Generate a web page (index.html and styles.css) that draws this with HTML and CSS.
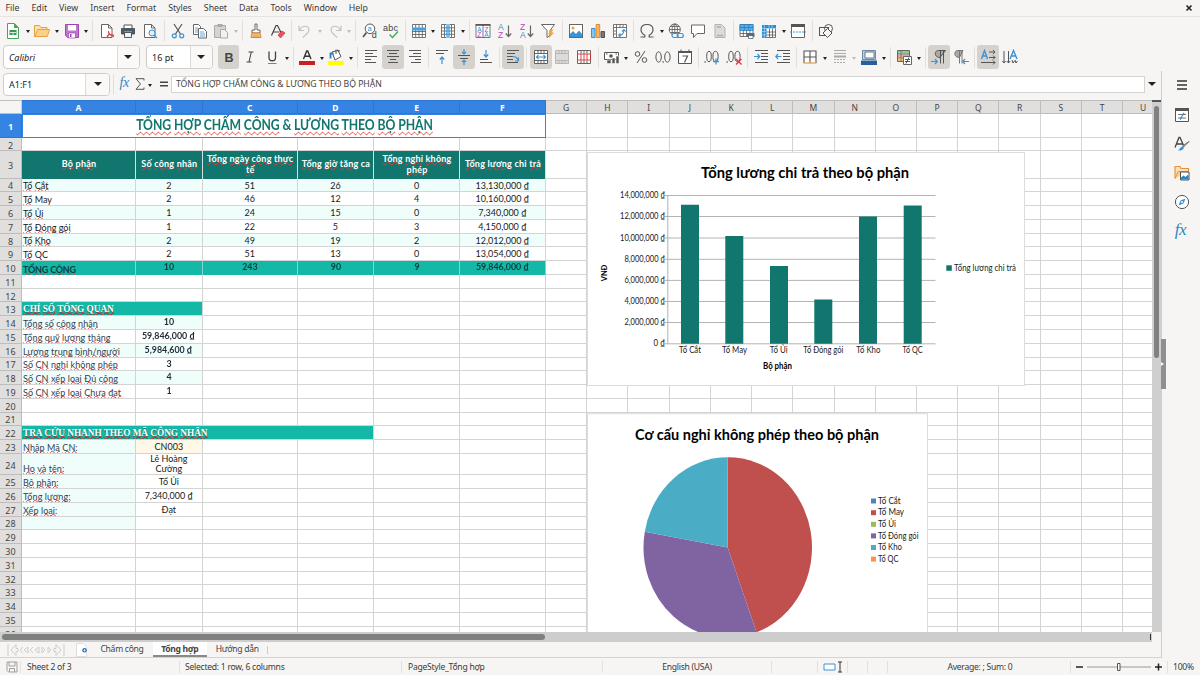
FILE: index.html
```html
<!DOCTYPE html>
<html lang="vi">
<head>
<meta charset="utf-8">
<title>Tổng hợp</title>
<link rel="stylesheet" href="styles.css">
</head>
<body>
<nav class="menubar">
  <span>File</span><span>Edit</span><span>View</span><span>Insert</span><span>Format</span><span>Styles</span><span>Sheet</span><span>Data</span><span>Tools</span><span>Window</span><span>Help</span>
  <svg class="close" viewBox="0 0 8 8"><path d="M1.500 1.500l5 5M6.500 1.500l-5 5" stroke="#222" stroke-width="1.600"/></svg>
</nav>

<div class="toolbar standard">
  <button class="tb"><svg viewBox="0 0 16 16"><path d="M2.500.5h7l4 4v11h-11z" fill="#fff" stroke="#4aa35c"/><path d="M9 .5v4.500h4.500z" fill="#4aa35c"/><path d="M4.500 7h7v5h-7z" fill="#2e9e4c"/><path d="M5 9.500h6M8 10v2" stroke="#fff" stroke-width=".8"/></svg></button><i class="dd"></i>
  <button class="tb"><svg viewBox="0 0 16 16"><path d="M.5 13.500v-11h5l1.500 2h6v3" fill="#fbe0b0" stroke="#e8a33d"/><path d="M.7 13.500l3-7h12l-2.500 7z" fill="#fbd08a" stroke="#e8a33d"/></svg></button><i class="dd"></i>
  <button class="tb"><svg viewBox="0 0 16 16"><path d="M1.500 1.500h13v13h-11l-2-2z" fill="#c078d0" stroke="#9d45b0"/><path d="M4 2h8v5.500H4z" fill="#fff"/><path d="M4.500 10h7v5h-7z" fill="#fff" stroke="#9d45b0" stroke-width=".7"/><path d="M6 11h1.500v3H6z" fill="#9d45b0"/></svg></button><i class="dd"></i>
  <i class="sep"></i>
  <button class="tb"><svg viewBox="0 0 16 16"><path d="M2.500 1.500h7l3.500 3.500v9.500h-10.500z" fill="#fff" stroke="#666"/><path d="M9.500 1.500V5H13" fill="none" stroke="#666"/><path d="M9.500 8c1 4-1 6-2 6.500M9.500 8c0 3 3 5.500 5.500 5.500M8 13c2-2 4-2 7-.5" fill="none" stroke="#e0444f" stroke-width="1.100"/></svg></button>
  <button class="tb"><svg viewBox="0 0 16 16"><path d="M4 5V2h8v3" fill="#fff" stroke="#555"/><rect x="1" y="5" width="14" height="6.500" rx="1" fill="#4b5963"/><path d="M4.500 9.500h7v5h-7z" fill="#eef5fa" stroke="#555"/><path d="M4 8.500h8" stroke="#4ea1dc"/></svg></button>
  <button class="tb"><svg viewBox="0 0 16 16"><path d="M2.500 1.500h7l3.500 3.500v9.500h-10.500z" fill="#fff" stroke="#666"/><path d="M9.500 1.500V5H13" fill="none" stroke="#666"/><circle cx="10" cy="10" r="3" fill="#e1f0fb" stroke="#3c93d4"/><path d="M12 12l3 3" stroke="#3c93d4" stroke-width="1.300"/></svg></button>
  <i class="sep"></i>
  <button class="tb"><svg viewBox="0 0 16 16"><path d="M4 1l6.500 10M12 1L5.500 11" stroke="#555" stroke-width="1.200"/><circle cx="4.300" cy="12.800" r="2" fill="none" stroke="#3c93d4" stroke-width="1.200"/><circle cx="11.700" cy="12.800" r="2" fill="none" stroke="#3c93d4" stroke-width="1.200"/></svg></button>
  <button class="tb"><svg viewBox="0 0 16 16"><path d="M1.500 1.500h5l2 2v8h-7z" fill="#fff" stroke="#666"/><path d="M6.500 5.500h5l3 3v6.500h-8z" fill="#fff" stroke="#666"/><path d="M3 5h3M3 7h3M3 9h3M8 9h4M8 11h5M8 13h5" stroke="#3c93d4" stroke-width=".8"/></svg></button>
  <button class="tb off"><svg viewBox="0 0 16 16"><path d="M1.500 2.500h11v12h-11z" fill="#d6d4d2" stroke="#aaa"/><path d="M4.500 1h5v3h-5z" fill="#aaa"/><path d="M7.500 6.500h4l3 3v5.500h-7z" fill="#f2f1f0" stroke="#aaa"/></svg></button><i class="dd off"></i>
  <i class="sep"></i>
  <button class="tb"><svg viewBox="0 0 16 16"><path d="M7 1h2v6h3v3H4V7h3z" fill="#fff" stroke="#666"/><path d="M4 10h8l1 4.500H3z" fill="#f6c37c" stroke="#d8872b"/><path d="M6 11.500v3M8 11.500v3M10 11.500v3" stroke="#d8872b" stroke-width=".6"/></svg></button>
  <button class="tb"><svg viewBox="0 0 16 16"><path d="M1.500 12.500L6 2.500h1.500l3.500 7M3.500 9h6" fill="none" stroke="#444" stroke-width="1.200"/><path d="M8 12l4-4 3 2-4.500 5z" fill="#e65560" stroke="#cf2c3a" stroke-width=".7"/></svg></button>
  <i class="sep"></i>
  <button class="tb"><svg viewBox="0 0 16 16"><path d="M2 2.500v5h5M2.500 7C6 1.500 12 2.500 12 7c0 3-3 4-6 7.500" fill="none" stroke="#c4c2c0" stroke-width="1.200"/></svg></button><i class="dd off"></i>
  <button class="tb"><svg viewBox="0 0 16 16"><path d="M14 2.500v5H9M13.500 7C10 1.500 4 2.500 4 7c0 3 3 4 6 7.500" fill="none" stroke="#c4c2c0" stroke-width="1.200"/></svg></button><i class="dd off"></i>
  <i class="sep"></i>
  <button class="tb"><svg viewBox="0 0 16 16"><circle cx="8" cy="5.800" r="4.800" fill="#fff" stroke="#555"/><path d="M4.500 9.500L1 14" stroke="#555" stroke-width="1.700"/><text x="5.500" y="8.300" class="i-blue" font-size="7.500">a</text><text x="9.800" y="15.300" class="i-dark" font-size="9">d</text></svg></button>
  <button class="tb"><svg viewBox="0 0 16 16"><text x="0" y="7.500" class="i-dark" font-size="9" textLength="15">abc</text><path d="M6.500 11.500l3 3L15 8.500" fill="none" stroke="#3faf5f" stroke-width="1.500"/></svg></button>
  <i class="sep"></i>
  <button class="tb"><svg viewBox="0 0 16 16"><path d="M1.500 1.500h13v13h-13zM4.700 1.500v13M8 1.500v13M11.300 1.500v13M1.500 8.500h13M1.500 11.500h13" fill="#fff" stroke="#555" stroke-width=".8"/><path d="M1 4.500h14v3H1z" fill="#3fa3e3"/></svg></button><i class="dd"></i>
  <button class="tb"><svg viewBox="0 0 16 16"><path d="M1.500 1.500h13v13h-13zM4.500 1.500v13M11.500 1.500v13M1.500 4.800h13M1.500 8h13M1.500 11.300h13" fill="#fff" stroke="#555" stroke-width=".8"/><path d="M6 1h4v14H6z" fill="#7cc2ee"/><path d="M6 4.800h4M6 8h4M6 11.300h4" stroke="#2a84c8" stroke-width=".8"/></svg></button><i class="dd"></i>
  <i class="sep"></i>
  <button class="tb"><svg viewBox="0 0 16 16"><path d="M1 1.500h14v13H1zM8 1.500v13" fill="#fff" stroke="#555" stroke-width=".8"/><path d="M.6 1h14.800v1.800H.6z" fill="#555"/><text x="2.200" y="8.700" class="i-blue" font-size="6.500">A</text><text x="2.300" y="14" class="i-pur" font-size="6.500">Z</text><text x="9.400" y="8.700" class="i-pur" font-size="6.500">Z</text><text x="9.200" y="14" class="i-blue" font-size="6.500">A</text></svg></button>
  <button class="tb"><svg viewBox="0 0 16 16"><text x="1" y="7" class="i-blue" font-size="8.500">A</text><text x="1" y="15" class="i-pur" font-size="8.500">Z</text><path d="M11.500 2.500v11M8.800 10.500l2.700 3 2.700-3" fill="none" stroke="#666" stroke-width="1.200"/></svg></button>
  <button class="tb"><svg viewBox="0 0 16 16"><text x="1" y="7" class="i-pur" font-size="8.500">Z</text><text x="1" y="15" class="i-blue" font-size="8.500">A</text><path d="M11.500 2.500v11M8.800 10.500l2.700 3 2.700-3" fill="none" stroke="#666" stroke-width="1.200"/></svg></button>
  <button class="tb"><svg viewBox="0 0 16 16"><path d="M1.500 1.500h13L10 7.500v5l-3 2v-7z" fill="#fff" stroke="#666"/><path d="M11 6.500l-3 5h2.500L9 15.500l5-6h-2.500l2-3z" fill="#f2a33a"/></svg></button>
  <i class="sep"></i>
  <button class="tb"><svg viewBox="0 0 16 16"><rect x="1.500" y="1.500" width="13" height="13" fill="#fff" stroke="#666"/><circle cx="5" cy="5" r="1.500" fill="#f2a33a"/><path d="M2 14v-3l3-3 3 3 3-3.500 3 3.500v3z" fill="#3c93d4"/></svg></button>
  <button class="tb"><svg viewBox="0 0 16 16"><path d="M1.500 5.500h3.500v9H1.500z" fill="#8cc4ec" stroke="#3c93d4"/><path d="M6.200 1.500h3.500v13H6.200z" fill="#f9b463" stroke="#e08a23"/><path d="M11 8.500h3.500v6H11z" fill="#777" stroke="#555"/></svg></button>
  <button class="tb"><svg viewBox="0 0 16 16"><path d="M1.500 1.500h13v13h-13zM1.500 4.500h13M4.500 1.500v13M8 1.500v3M11 1.500v3M1.500 8h3M1.500 11h3" fill="#fff" stroke="#666" stroke-width=".9"/><path d="M6.500 12.500c4 0 5.500-2 5.500-6M6.500 12.500l2-2M6.500 12.500l2 1.500M12 6.500l-2 2M12 6.500l1.700 2" fill="none" stroke="#3c93d4" stroke-width="1.100"/></svg></button>
  <i class="sep"></i>
  <button class="tb"><svg viewBox="0 0 16 16"><path d="M1.500 14h4.300v-1.800C3.200 10.700 2 9 2 6.700 2 3.500 4.500 1.500 8 1.500s6 2 6 5.200c0 2.300-1.200 4-3.800 5.500V14h4.300" fill="none" stroke="#555" stroke-width="1.200"/></svg></button><i class="dd"></i>
  <button class="tb"><svg viewBox="0 0 16 16"><circle cx="6.800" cy="6.500" r="5.500" fill="#fff" stroke="#555" stroke-width=".9"/><path d="M1.300 6.500h11M6.800 1v11M2.500 3.500h8.600M2.500 9.500h8.600" stroke="#555" stroke-width=".8"/><ellipse cx="6.800" cy="6.500" rx="2.700" ry="5.500" fill="none" stroke="#555" stroke-width=".8"/><rect x="4" y="10.500" width="6" height="4" rx="2" fill="#eef6fc" stroke="#3c93d4" stroke-width="1.200"/><rect x="9.300" y="10.500" width="6" height="4" rx="2" fill="none" stroke="#3c93d4" stroke-width="1.200"/></svg></button>
  <button class="tb"><svg viewBox="0 0 16 16"><path d="M1.500 2h13v8.500H7l-3.500 4v-4h-2z" fill="#fff" stroke="#666"/></svg></button>
  <button class="tb"><svg viewBox="0 0 16 16"><path d="M3 1.500h6.500L13 5v9.500H3z" fill="#dddbd9" stroke="#b5b3b1"/><path d="M5 4h4M5 12.500h6" stroke="#b0aeac" stroke-width="1.500"/></svg></button>
  <i class="sep"></i>
  <button class="tb"><svg viewBox="0 0 16 16"><path d="M1 1.500h13v12H1zM4.300 1.500v12M7.600 1.500v12M11 1.500v12M1 10.500h13" fill="#fff" stroke="#555" stroke-width=".8"/><path d="M1 1.500h13v6H1z" fill="#54aee8" stroke="#2a79b8" stroke-width=".7"/><path d="M1 4.500h13M5.300 1.500v6M9.700 1.500v6" stroke="#2a79b8" stroke-width=".7"/><rect x="8" y="10" width="7.500" height="4" rx="1" fill="#4b6f8a"/><path d="M9.500 12.500h4.500v3H9.500z" fill="#fff" stroke="#456" stroke-width=".7"/></svg></button>
  <button class="tb"><svg viewBox="0 0 16 16"><path d="M1.500 2.500h13v12h-13zM8.500 2.500v12M11.500 2.500v12M2 9h12.500M2 12h12.500" fill="#fff" stroke="#555" stroke-width=".8"/><path d="M1 2h14v3.500H5.500V15H1z" fill="#2b8fd6"/><path d="M3.300 0v15M1 5.500h14M1 8.500h4M1 12h4M8 2v3M11 2v3" stroke="#bfe0f7" stroke-width=".6"/></svg></button><i class="dd"></i>
  <button class="tb"><svg viewBox="0 0 16 16"><path d="M1.500 1.500h13v13h-13z" fill="#fff" stroke="#555" stroke-width=".9"/><path d="M1 1h14v3H1z" fill="#555"/><path d="M0 9h16" stroke="#3c93d4" stroke-dasharray="2 1"/></svg></button>
  <i class="sep"></i>
  <button class="tb"><svg viewBox="0 0 16 16"><rect x="1.500" y="4.500" width="9" height="8" fill="none" stroke="#555"/><circle cx="10.500" cy="5.500" r="4" fill="none" stroke="#555"/><path d="M9.500 5.500l4.500 4.500-4.500 4.500L5 10z" fill="#f6f5f4" stroke="#555"/></svg></button>
</div>

<div class="toolbar formatting">
  <div class="combo font-name"><em>Calibri</em><b></b></div>
  <div class="combo font-size"><span>16 pt</span><b></b></div>
  <button class="tb on"><svg viewBox="0 0 16 16"><text x="3.500" y="12.500" class="i-dark" font-size="12.500" font-weight="700">B</text></svg></button>
  <button class="tb"><svg viewBox="0 0 16 16"><path d="M6.500 3h5M4.500 13h5M9.300 3L7 13" fill="none" stroke="#444" stroke-width="1.100"/></svg></button>
  <button class="tb"><svg viewBox="0 0 16 16"><path d="M5 2.500v6c0 4.300 6.500 4.300 6.500 0v-6" fill="none" stroke="#444" stroke-width="1.300"/><path d="M4 14.500h8.500" stroke="#3c93d4"/></svg></button><i class="dd"></i>
  <i class="sep"></i>
  <button class="tb"><svg viewBox="0 0 16 16"><path d="M4.500 10L7.700 2h1L12 10M5.700 7.300h5" fill="none" stroke="#333" stroke-width="1.400"/><path d="M0 12h16v4H0z" fill="#c9211e"/></svg></button><i class="dd"></i>
  <button class="tb"><svg viewBox="0 0 16 16"><path d="M4 3l6-1.500 3 6-6 3.500z" fill="#fff" stroke="#555"/><path d="M8 5V.500M9 1l3 1" stroke="#555"/><path d="M2.500 9.500V4.500h3" fill="none" stroke="#2a7fc4" stroke-width="1.800"/><path d="M0 12h16v4H0z" fill="#ff0"/></svg></button><i class="dd"></i>
  <i class="sep"></i>
  <button class="tb"><svg viewBox="0 0 16 16"><path d="M2 1.500h12M2 4.500h8M2 7.500h12M2 10.500h6M2 13.500h11" stroke="#555"/></svg></button>
  <button class="tb on"><svg viewBox="0 0 16 16"><path d="M2 1.500h12M4 4.500h8M2 7.500h12M5 10.500h6M3 13.500h10" stroke="#555"/></svg></button>
  <button class="tb"><svg viewBox="0 0 16 16"><path d="M2 1.500h12M6 4.500h8M2 7.500h12M8 10.500h6M4 13.500h10" stroke="#555"/></svg></button>
  <i class="sep"></i>
  <button class="tb"><svg viewBox="0 0 16 16"><path d="M2 1.500h12M2 4.500h8" stroke="#555"/><path d="M8 15V8M5.800 10.500L8 8l2.200 2.500" fill="none" stroke="#3c93d4" stroke-width="1.200"/></svg></button>
  <button class="tb on"><svg viewBox="0 0 16 16"><path d="M2 6.500h12M4 9.500h8" stroke="#555"/><path d="M8 0v5M6 3l2 2 2-2M8 16v-5M6 13l2-2 2 2" fill="none" stroke="#3c93d4" stroke-width="1.200"/></svg></button>
  <button class="tb"><svg viewBox="0 0 16 16"><path d="M2 10.500h8M2 13.500h12" stroke="#555"/><path d="M8 1v7M5.800 5.500L8 8l2.200-2.500" fill="none" stroke="#3c93d4" stroke-width="1.200"/></svg></button>
  <i class="sep"></i>
  <button class="tb on"><svg viewBox="0 0 16 16"><path d="M2 1.500h12M2 4.500h8M2 7.500h6M2 10.500h6M2 13.500h11" stroke="#555"/><path d="M7.500 7.500c4 0 4.500 1.500 6 4M13.500 8.500v3.500h-3.500" fill="none" stroke="#3c93d4" stroke-width="1.200"/></svg></button>
  <i class="sep"></i>
  <button class="tb on"><svg viewBox="0 0 16 16"><path d="M1.500 1.500h13v13h-13zM1.500 4.500h13M1.500 11.500h13M5 1.500v3M8 1.500v3M11 1.500v3M5 11.500v3M8 11.500v3M11 11.500v3" fill="#fff" stroke="#555" stroke-width=".9"/><path d="M3.500 8h9M5.500 6l-2 2 2 2M10.500 6l2 2-2 2" fill="none" stroke="#3c93d4" stroke-width="1.100"/></svg></button>
  <button class="tb"><svg viewBox="0 0 16 16"><path d="M1.500 1.500h13v13h-13zM1.500 4.500h13M1.500 11.500h13M5 1.500v3M8 1.500v3M11 1.500v3M5 11.500v3M8 11.500v3M11 11.500v3" fill="#dddbd9" stroke="#b5b3b1" stroke-width=".9"/></svg></button>
  <button class="tb"><svg viewBox="0 0 16 16"><path d="M1.500 1.500h13v13h-13zM5 1.500v3M8 1.500v3M11 1.500v3M5 11.500v3M8 11.500v3M11 11.500v3" fill="#fff" stroke="#555" stroke-width=".9"/><path d="M1.500 5h13v6h-13zM5 5v6M8 5v6M11 5v6" fill="none" stroke="#d6322d" stroke-width=".9"/></svg></button>
  <i class="sep"></i>
  <button class="tb"><svg viewBox="0 0 16 16"><path d="M.5 3.500h14v7H.5z" fill="#fff" stroke="#555"/><circle cx="7" cy="7" r="1.800" fill="#555"/><path d="M2 5h1.500M11.500 5H13" stroke="#555"/><path d="M3 11h4v3.500H3zM8 9h3v5.500H8zM12 7h3v7.500h-3z" fill="#555" stroke="#f6f5f4" stroke-width=".6"/></svg></button><i class="dd"></i>
  <button class="tb"><svg viewBox="0 0 16 16"><circle cx="4.500" cy="5" r="2.300" fill="none" stroke="#555"/><circle cx="11.500" cy="11" r="2.300" fill="none" stroke="#555"/><path d="M12 2L4 14" stroke="#555"/></svg></button>
  <button class="tb"><svg viewBox="0 0 16 16"><ellipse cx="3.600" cy="8" rx="2.700" ry="5.200" fill="none" stroke="#555"/><ellipse cx="12.400" cy="8" rx="2.700" ry="5.200" fill="none" stroke="#555"/><path d="M7.500 13h1.200" stroke="#555" stroke-width="1.300"/></svg></button>
  <button class="tb"><svg viewBox="0 0 16 16"><path d="M1.500 2.500h13v12h-13z" fill="#fff" stroke="#555"/><path d="M1 2h14v2H1z" fill="#555"/><path d="M4 .5v2M12 .5v2" stroke="#555"/><path d="M5.500 7h5l-3 6.500" fill="none" stroke="#555" stroke-width="1.200"/></svg></button>
  <i class="sep"></i>
  <button class="tb"><svg viewBox="0 0 16 16"><path d="M.5 13h1.200" stroke="#555" stroke-width="1.300"/><ellipse cx="5" cy="7.500" rx="2.300" ry="5.200" fill="none" stroke="#555"/><ellipse cx="11.500" cy="7.500" rx="2.600" ry="5.200" fill="none" stroke="#555"/><path d="M12 9.500v6M9 12.500h6" stroke="#3c93d4" stroke-width="1.300"/></svg></button>
  <button class="tb"><svg viewBox="0 0 16 16"><path d="M.5 13h1.200" stroke="#555" stroke-width="1.300"/><ellipse cx="5" cy="7.500" rx="2.300" ry="5.200" fill="none" stroke="#555"/><ellipse cx="11.500" cy="7.500" rx="2.600" ry="5.200" fill="none" stroke="#555"/><path d="M10 10l5.500 5.500M15.500 10L10 15.500" stroke="#e0343c" stroke-width="1.300"/></svg></button>
  <i class="sep"></i>
  <button class="tb"><svg viewBox="0 0 16 16"><path d="M2 1.500h13M8 4.500h7M8 7.500h7M8 10.500h7M2 13.500h13" stroke="#555"/><path d="M1 7.500h5.500M4.500 5l2.200 2.500L4.500 10" fill="none" stroke="#3c93d4" stroke-width="1.200"/></svg></button>
  <button class="tb"><svg viewBox="0 0 16 16"><path d="M2 1.500h13M8 4.500h7M8 7.500h7M8 10.500h7M2 13.500h13" stroke="#555"/><path d="M1 7.500h5.500M3 5L.8 7.500 3 10" fill="none" stroke="#3c93d4" stroke-width="1.200"/></svg></button>
  <i class="sep"></i>
  <button class="tb"><svg viewBox="0 0 16 16"><path d="M2 14V2h12v12M8 2v12M2 8h12" fill="#fff" stroke="#555" stroke-width="1.100"/><path d="M1.500 14h13" stroke="#e99b47" stroke-width="1.200"/></svg></button><i class="dd"></i>
  <button class="tb"><svg viewBox="0 0 16 16"><path d="M2 1.500h12M2 4.500h12" stroke="#aaa"/><path d="M2 7.500h12" stroke="#aaa" stroke-width="2"/><path d="M2 10.500h12M2 13.500h12" stroke="#aaa" stroke-dasharray="2 1"/></svg></button><i class="dd off"></i>
  <button class="tb"><svg viewBox="0 0 16 16"><path d="M1.500 1.500h13v9h-13z" fill="#aed6f3" stroke="#6a8ba3"/><path d="M4 3h9v6H4z" fill="#fff" stroke="#555" stroke-width=".8"/><path d="M0 11.500h16V16H0z" fill="#2a6099"/></svg></button><i class="dd"></i>
  <i class="sep"></i>
  <button class="tb"><svg viewBox="0 0 16 16"><path d="M1.500 1.500h12v11h-12z" fill="#fff" stroke="#666"/><path d="M2 2h11v3H2z" fill="#86cf94"/><path d="M2 5.500h11v3H2z" fill="#f19d98"/><path d="M2 9h6v3H2z" fill="#f8c471"/><path d="M5 1.500v11M1.500 5.200h12M1.500 8.800h6" stroke="#666" stroke-width=".7"/><path d="M7.500 7.500h8v8h-8z" fill="#fff" stroke="#666"/><path d="M9 10.500h5M9 12.500h5M13 8.500l-3 6" stroke="#555"/></svg></button><i class="dd"></i>
  <i class="sep"></i>
  <button class="tb on"><svg viewBox="0 0 16 16"><path d="M14.500 1.500H7.500c-4.500 0-4.500 7 1.500 7zM9.500 1.500v13M12.500 1.500v13" fill="#aaa8a5" stroke="#555"/><path d="M0 12.500h6M4 10l2.300 2.500L4 15" fill="none" stroke="#3c93d4" stroke-width="1.200"/></svg></button>
  <button class="tb"><svg viewBox="0 0 16 16"><path d="M10 1.500H5c-4.500 0-4.500 7 1.500 7zM6.500 1.500v13M9 1.500v13" fill="#aaa8a5" stroke="#777"/><path d="M16 12.500h-6M12 10l-2.300 2.500L12 15" fill="none" stroke="#3c93d4" stroke-width="1.200"/></svg></button>
  <i class="sep"></i>
  <button class="tb on"><svg viewBox="0 0 16 16"><path d="M1.500 10L4.500 1.500 7.500 10M2.500 7h4" fill="none" stroke="#3c93d4" stroke-width="1.400"/><path d="M9 3h6M13 1l2 2-2 2M9 8.500h6M13 6.500l2 2-2 2M1 13.500h14M13 11.500l2 2-2 2" fill="none" stroke="#555"/></svg></button>
  <button class="tb"><svg viewBox="0 0 16 16"><path d="M8 10l3.500-8.500L15 10M9.500 7h4.500" fill="none" stroke="#3c93d4" stroke-width="1.400"/><path d="M2 2v12M.3 12L2 14l1.700-2M6.500 2v12M4.800 12l1.700 2 1.700-2M10 11l1 3 1.500-2M13 11l1 3 1.500-2" fill="none" stroke="#555"/></svg></button>
</div>

<main class="work">
  <section class="document">
    <div class="formula-bar">
      <div class="combo name-box"><span>A1:F1</span><b></b></div>
      <i class="sep"></i>
      <span class="fx">fx</span>
      <svg class="sigma" viewBox="0 0 10 12"><path d="M9 2.500V.700H1L5.500 6 1 11.300h8V9.500" fill="none" stroke="#555"/></svg>
      <i class="dd"></i>
      <svg class="equals" viewBox="0 0 10 10"><path d="M1 3.300h8M1 6.700h8" stroke="#444" stroke-width="1.500"/></svg>
      <div class="formula-input">TỔNG HỢP CHẤM CÔNG &amp; LƯƠNG THEO BỘ PHẬN</div>
      <i class="dd wide"></i>
    </div>

    <div class="sheet-area">
      <div class="sheet">
        <div class="grid" id="grid"></div>

        <svg class="chart chart-bar" viewBox="587 152 438 234">
          <rect x="587.500" y="152.500" width="437" height="233" fill="#fff" stroke="#dcdcdc"/>
          <text class="chart-title" x="701" y="178" textLength="208">Tổng lương chi trả theo bộ phận</text>
          <path d="M664.500 195.500H935.500M664.500 216.500H935.500M664.500 238H935.500M664.500 259.300H935.500M664.500 280.400H935.500M664.500 301.500H935.500M664.500 322.500H935.500M664.500 343.800H935.500M667.800 195.500V343.800" stroke="#b3b3b3" fill="none"/>
          <g fill="#10766e"><path d="M681 204.700h18v139h-18zM725.300 236h18v107.700h-18zM770 266h18v77.700h-18zM814.300 299.600h18v44.100h-18zM859 216.500h18v127.200h-18zM903.700 205.500h18v138.200h-18z"/></g>
          <g class="axis end">
            <text x="665" y="198.200" textLength="45">14,000,000 ₫</text><text x="665" y="219.300" textLength="45">12,000,000 ₫</text><text x="665" y="240.500" textLength="45">10,000,000 ₫</text><text x="665" y="262" textLength="40.500">8,000,000 ₫</text><text x="665" y="283" textLength="40.500">6,000,000 ₫</text><text x="665" y="304" textLength="40.500">4,000,000 ₫</text><text x="665" y="325.200" textLength="40.500">2,000,000 ₫</text><text x="665" y="346.200" textLength="11.500">0 ₫</text>
          </g>
          <g class="axis mid">
            <text x="690" y="353.300" textLength="22">Tổ Cắt</text><text x="734.500" y="353.300" textLength="25">Tổ May</text><text x="778.700" y="353.300" textLength="18">Tổ Ủi</text><text x="823.300" y="353.300" textLength="40">Tổ Đóng gói</text><text x="868.300" y="353.300" textLength="24">Tổ Kho</text><text x="912.500" y="353.300" textLength="20">Tổ QC</text>
            <text class="bold" x="777.500" y="369.300" textLength="29">Bộ phận</text>
            <text class="bold small" transform="translate(607.300 273) rotate(-90)" textLength="16.500">VNĐ</text>
          </g>
          <rect x="946.300" y="265.300" width="5.500" height="5.500" fill="#10766e"/>
          <text class="axis" x="954" y="270.600" textLength="62">Tổng lương chi trả</text>
        </svg>

        <svg class="chart chart-pie" viewBox="587 413 341 234">
          <rect x="587.500" y="413.700" width="340" height="260" fill="#fff" stroke="#dcdcdc"/>
          <text class="chart-title" x="635" y="440" textLength="244">Cơ cấu nghỉ không phép theo bộ phận</text>
          <path d="M727.700 547.500V457.300A84.200 90.200 0 0 1 756.500 632.300Z" fill="#c0504d"/>
          <path d="M727.700 547.500L756.500 632.300A84.200 90.200 0 0 1 644.800 531.800Z" fill="#8064a2"/>
          <path d="M727.700 547.500L644.800 531.800A84.200 90.200 0 0 1 727.700 457.300Z" fill="#4bacc6"/>
          <path d="M871 498.500h5v5h-5z" fill="#4f81bd"/><path d="M871 510.200h5v5h-5z" fill="#c0504d"/><path d="M871 521.800h5v5h-5z" fill="#9bbb59"/><path d="M871 533.400h5v5h-5z" fill="#8064a2"/><path d="M871 545h5v5h-5z" fill="#4bacc6"/><path d="M871 556.600h5v5h-5z" fill="#f79646"/>
          <g class="axis">
            <text x="878" y="503.600" textLength="22.500">Tổ Cắt</text><text x="878" y="515.300" textLength="26">Tổ May</text><text x="878" y="526.900" textLength="18">Tổ Ủi</text><text x="878" y="538.500" textLength="40.500">Tổ Đóng gói</text><text x="878" y="549.700" textLength="24">Tổ Kho</text><text x="878" y="561.500" textLength="20.500">Tổ QC</text>
          </g>
        </svg>
      </div>
      <div class="vscroll"><div class="vthumb"></div></div>
    </div>

    <div class="hscroll"><div class="hthumb"></div><i></i></div>
    <div class="tabs">
      <svg class="tab-nav" viewBox="0 0 60 14"><g fill="none" stroke="#cfcdcb"><path d="M2 1v12M10 1.500L5 7l5 5.500M10 1.500v4h2v3h-2v4M22 4l-4 3 4 3zM16.500 4l-2 3 2 3M33 4l-4 3 4 3zM27 4l-3 3 3 3M36 4l3 3-3 3zM42 4l3 3-3 3zM50 1.500L55 7l-5 5.500v-4h-2v-3h2zM58 1v12"/></g></svg>
      <svg class="tab-add" viewBox="0 0 14 14"><path d="M1.500.5h7l3 3v10h-10z" fill="#fff" stroke="#ddd"/><circle cx="9.500" cy="7.300" r="2.200" fill="#2c66b0"/><path d="M9.500 6v2.600M8.200 7.300h2.600" stroke="#fff" stroke-width=".7"/></svg>
      <span class="tab first">Chấm công</span><span class="tab active">Tổng hợp</span><span class="tab last">Hướng dẫn</span>
    </div>
  </section>

  <aside class="sidebar">
    <div class="grip"></div>
    <svg viewBox="0 0 16 16"><path d="M3 4h10M3 8h10M3 12h10" stroke="#333" stroke-width="1.400"/></svg>
    <svg viewBox="0 0 16 16"><path d="M1.500 1.500h13v13h-13z" fill="#fff" stroke="#555"/><path d="M1 1h14v3H1z" fill="#555"/><path d="M4 7.500h8M4 11h8" stroke="#777"/><path d="M10 6l-2 3M8 9.500l-2 3" stroke="#3c93d4" stroke-width="1.500"/></svg>
    <svg viewBox="0 0 16 16"><path d="M1 11.500L5 1.500h1l4 9M2.500 8h6" fill="none" stroke="#444" stroke-width="1.300"/><path d="M15 5.500L9.500 11l-1-1z" fill="#fff" stroke="#666"/><path d="M9 10.500c2 1.500 0 4.500-5 4 2-1 1.500-3.500 5-4z" fill="#3c93d4"/></svg>
    <svg viewBox="0 0 16 16"><path d="M1 13.500v-12h5l1 2h7.500v3" fill="#fbe3bd" stroke="#e8923c" stroke-width="1.200"/><path d="M1 13.500l3-7h11" fill="#fbd08a" stroke="#e8923c"/><path d="M6.500 7h8.500v8H6.500z" fill="#fff" stroke="#555"/><path d="M7 14.500v-2l2.500-2 2 1.500 2-2 1 1v3.500z" fill="#2a84c8"/></svg>
    <svg viewBox="0 0 16 16"><circle cx="8" cy="8" r="6.600" fill="#fff" stroke="#555"/><path d="M11.500 4.500l-2 5-5 2 2-5z" fill="#3c93d4"/><circle cx="8" cy="8" r="1" fill="#fff"/></svg>
    <span class="fx big">fx</span>
  </aside>
</main>

<footer class="status">
  <svg class="st-save" viewBox="0 0 12 12"><path d="M1 1h10v10H2.500L1 9.500zM3 1v4h6V1M3.500 11V7.500h5V11" fill="none" stroke="#999" stroke-width=".9"/></svg>
  <span class="st-sheet">Sheet 2 of 3</span>
  <span class="st-sel">Selected: 1 row, 6 columns</span>
  <span class="st-style">PageStyle_Tổng hợp</span>
  <span class="st-lang">English (USA)</span>
  <span class="st-insert"></span>
  <span class="st-mode"><svg viewBox="0 0 20 12"><path d="M1 3h11v6H1z" fill="#fff" stroke="#3c93d4"/><path d="M15 1h4M15 11h4M17 1v10" stroke="#333"/></svg></span>
  <span class="st-gap"></span><span class="st-gap"></span>
  <span class="st-sum">Average: ; Sum: 0</span>
  <span class="st-zoom"><svg viewBox="0 0 88 12"><path d="M1 6h7M80 6h7M83.500 2.500v7" stroke="#222" stroke-width="1.500"/><path d="M12 6h64" stroke="#999"/><path d="M42.500 2.500h2.500v7h-2.500z" fill="#fff" stroke="#555"/></svg></span>
  <span class="st-pct">100%</span>
</footer>
<script src="sheet.js"></script>
</body>
</html>
```

FILE: styles.css
```css
* { box-sizing: border-box; }
body {
  margin: 0; width: 1200px; height: 675px; overflow: hidden;
  display: flex; flex-direction: column;
  background: #f6f5f4; color: #3a3a3a;
  font-family: "Noto Sans", sans-serif; font-size: 8.7px;
}
svg { display: block; flex: none; }
.i-dark { fill: #444; } .i-blue { fill: #2f8fd5; } .i-pur { fill: #b04cc0; }

.menubar { height: 17px; flex: none; display: flex; align-items: center; gap: 12.1px; padding: 0 7px 0 5.5px; border-bottom: 1px solid #e6e4e2; font-size: 8.8px; letter-spacing: -.05px; }
.close { width: 8px; height: 8px; margin-left: auto; }

.toolbar { display: flex; align-items: center; flex: none; height: 27px; }
.standard { padding-left: 2.2px; }
.formatting { padding-left: 3px; padding-bottom: 1px; }
.tb { width: 21.85px; height: 24.5px; padding: 0; border: 0; border-radius: 3px; background: none; display: flex; align-items: center; justify-content: center; flex: none; }
.tb svg { width: 16px; height: 16px; }
.tb.on { background: #d5d2ce; }
.dd { width: 7.5px; flex: none; display: flex; justify-content: center; margin-top: 2px; }
.dd::after { content: ""; border: 2.5px solid transparent; border-top: 3px solid #222; border-bottom: 0; }
.dd.off::after { border-top-color: #bbb; }
.dd.wide { width: 12px; margin: 0 0 0 1px; }
.dd.wide::after { border-width: 4px 4px 0; }
.sep { width: 5.5px; height: 21px; flex: none; display: flex; justify-content: center; }
.sep::after { content: ""; width: 1px; background: #e2e0de; }

.combo { display: flex; align-items: center; height: 24px; flex: none; background: #fff; border: 1px solid #cfccc9; border-radius: 4px; padding-left: 5px; color: #222; overflow: hidden; font-size: 9px; }
.combo b { margin-left: auto; align-self: stretch; width: 22px; border-left: 1px solid #dcd9d6; background: #faf9f8; display: flex; align-items: center; justify-content: center; }
.combo b::after { content: ""; border: 4px solid transparent; border-top: 4.5px solid #222; border-bottom: 0; }
.font-name { width: 136.5px; margin-right: 6.5px; }
.font-size { width: 66.5px; margin-right: 5.1px; }

.work { flex: none; display: flex; height: 587px; }
.document { width: 1161.5px; flex: none; display: flex; flex-direction: column; border-right: 1px solid #d0cecc; }
.formula-bar { height: 29px; flex: none; display: flex; align-items: center; padding: 0 3px 3px 3px; }
.name-box { width: 107px; height: 23px; margin-right: 1px; }
.name-box b { width: 24px; }
.fx { font: italic 14px "Liberation Serif", serif; color: #2f86c9; margin: -2px 5px 0 3px; width: 11px; letter-spacing: -.5px; }
.sigma { width: 10px; height: 12px; margin-right: 1.5px; margin-left: -1px; }
.equals { width: 10px; height: 10px; margin: 0 2.5px 0 5px; }
.formula-input { flex: 1; height: 17px; border: 1px solid #d6d4d2; background: #fff; padding-left: 4px; line-height: 15px; font-size: 8.7px; letter-spacing: -.05px; color: #444; }

.sheet-area { height: 532px; flex: none; display: flex; }
.sheet { position: relative; width: 1152px; overflow: hidden; background: #fff; }
.grid { display: grid; width: 1160px; font-family: Lato, Carlito, "Open Sans", sans-serif; font-size: 9px; color: #1a1a1a; }
.cell { border-right: 1px solid #d4d4d4; border-bottom: 1px solid #d4d4d4; overflow: hidden; white-space: nowrap; line-height: 11px; display: flex; min-width: 0; }
.head { background: #e0dfde; border-color: #bdbdbd; color: #444; justify-content: center; align-items: center; font-family: "Noto Sans", sans-serif; font-size: 8.5px; border-top: 1px solid #bdbdbd; }
.rowhead { border-top: 0; font-size: 9px; padding-top: 2px; }
.head.sel { background: #3584e4; color: #fff; font-weight: 700; border-color: #2f75cb; }
.corner { background: #f6f5f4; border-right-color: #ccc; }
.left { padding-left: 1px; align-items: flex-end; }
.mid { justify-content: center; text-align: center; padding-top: 1px; }
.alt { background: #effefb; }
.input { background: #fff8e6; }
.title { border: 1.5px solid #3584e4; border-left-width: 1px; font-size: 14.3px; font-weight: 700; color: #10766e; justify-content: center; line-height: 20px; letter-spacing: -.1px; }
.title > span { transform: scaleX(.855); }
.th { background: #10766e; color: #fff; font-weight: 700; justify-content: center; align-items: center; text-align: center; line-height: 10.3px; white-space: normal; border-color: #cfe2e0; border-bottom: 0; letter-spacing: .2px; padding: 0 2px 1px 3px; }
.total { background: #14b8a6; color: #0d4040; font-weight: 700; border-color: #7fd6cc; border-bottom: 0; }
.total.mid, .strong { font-size: 10.2px; font-weight: 700; padding-top: 0; }
.total.mid > span, .strong > span { transform: scaleX(.87); }
.total.left { letter-spacing: -.2px; }
.strong { color: #1f2937; }
.label { color: #334155; letter-spacing: .08px; }
.band { background: #14b8a6; color: #fff; font: 700 9.3px/11px "Liberation Serif", serif; align-items: flex-end; padding-left: 1px; letter-spacing: -.05px; text-shadow: 0 1px 1px #245a54; }
.wrap { white-space: normal; line-height: 10px; padding: 0 12px; }
.sp { text-decoration: underline wavy #e03a3a .6px; text-underline-offset: .5px; text-decoration-skip-ink: none; }
.left .sp, .band .sp, .th .sp { text-underline-offset: -1px; }

.chart { position: absolute; font-family: Lato, Carlito, "Open Sans", sans-serif; }
.chart-bar { left: 587px; top: 52px; width: 438px; height: 234px; }
.chart-pie { left: 587px; top: 313px; width: 341px; height: 234px; }
.chart-title { font-size: 15.3px; font-weight: 700; fill: #000; }
.axis { font-size: 9px; fill: #222; }
.end { text-anchor: end; }
.axis.mid { text-anchor: middle; }
.bold { font-weight: 700; fill: #000; }
.small { font-size: 7.5px; }

.vscroll { width: 8.5px; background: #cfcfcf; padding: 4px 1.5px 0; border-top: 2px solid #555; }
.vthumb { height: 252px; width: 5px; border-radius: 3px; background: #7f807f; }
.hscroll { width: 1151.5px; height: 10px; flex: none; background: #cdcdcd; padding: 2px 0 0 2px; display: flex; justify-content: space-between; }
.hthumb { width: 542.5px; height: 6px; border-radius: 3px; background: #7e807e; }
.hscroll i { width: 1px; height: 6px; margin-right: 1px; background: #333; }
.tabs { height: 16px; flex: none; display: flex; align-items: stretch; border-bottom: 1px solid #d5d3d1; }
.tab-nav { width: 60px; height: 14px; margin: 1px 9px 0 5.5px; }
.tab-add { width: 14px; height: 14px; margin-top: 1px; }
.tab { display: flex; align-items: center; justify-content: center; color: #444; font-size: 8.6px; letter-spacing: -.3px; padding-bottom: 1px; }
.first { width: 64px; padding-left: 3px; }
.active { width: 54.5px; background: #fff; font-weight: 700; border-bottom: 2px solid #888a88; padding-bottom: 0; letter-spacing: -.35px; }
.last { width: 60.5px; position: relative; }
.last::after { content: ""; position: absolute; right: 0; top: 4px; height: 8px; width: 1px; background: #ccc; }

.sidebar { position: relative; flex: 1; display: flex; flex-direction: column; align-items: center; padding: 6px 0 0 2px; gap: 13.1px; }
.sidebar svg { width: 16px; height: 16px; }
.sidebar svg:nth-of-type(1) { margin-bottom: 1px; }
.grip { position: absolute; left: -.5px; top: 268px; width: 4.5px; height: 50px; background: #8e908e; display: flex; align-items: center; }
.grip::after { content: ""; border: 2.5px solid transparent; border-left: 3px solid #fff; border-right: 0; }
.fx.big { font-size: 17px; margin: -2px 0 0; width: 14px; line-height: 18px; }

.status { height: 17px; flex: none; display: flex; align-items: center; font-size: 8.6px; letter-spacing: -.27px; padding-left: 6px; }
.status span { height: 12px; display: flex; align-items: center; border-left: 1px solid #e3e1df; flex: none; }
.st-save { width: 12px; height: 12px; margin-right: 2px; }
.status .st-sheet { width: 159px; padding-left: 6px; }
.status .st-sel { width: 222px; padding-left: 5px; }
.status .st-style { width: 201px; padding-left: 6px; }
.status .st-lang { width: 169px; justify-content: center; }
.status .st-insert { width: 46px; }
.status .st-mode { width: 30px; justify-content: center; }
.st-mode svg { width: 20px; height: 12px; }
.status .st-gap { width: 20px; }
.status .st-sum { width: 183px; justify-content: center; padding-left: 2px; }
.status .st-zoom { width: 97px; justify-content: center; }
.st-zoom svg { width: 88px; height: 12px; }
.status .st-pct { padding-left: 5px; }
```

FILE: sheet.js
```js
const colWidths = [22, 114, 66.7, 95, 76.5, 85.7, 86.1, 41.3].concat(Array(14).fill(41.23));
const letters = "ABCDEFGHIJKLMNOPQRSTU".split("");
const rowHeights = [14];
for (let r = 1; r <= 36; r++) {
  rowHeights.push(r === 1 ? 23.7 : r === 2 ? 13.8 : r === 3 ? 27.1 : r === 24 ? 21.4 : 13.78);
}
const grid = document.getElementById("grid");
grid.style.gridTemplateColumns = colWidths.map(w => w + "px").join(" ");
grid.style.gridTemplateRows = rowHeights.map(h => h + "px").join(" ");

const known = new Set(["May", "QC", "&", "ca", "chi"]);
const taken = new Set();

function add(row, col, cls, text, span = 1, spell = false) {
  const el = document.createElement("div");
  el.className = "cell " + cls;
  el.style.gridArea = `${row + 1} / ${col + 1} / span 1 / span ${span}`;
  const body = document.createElement("span");
  if (spell) {
    text.split(" ").forEach((word, i) => {
      if (i) body.append(" ");
      const s = document.createElement("span");
      if (!known.has(word)) s.className = "sp";
      s.textContent = word;
      body.append(s);
    });
  } else body.textContent = text;
  if (text) el.append(body);
  grid.append(el);
  for (let i = 0; i < span; i++) taken.add(row + ":" + (col + i));
}

add(0, 0, "head corner", "");
letters.forEach((l, i) => add(0, i + 1, "head" + (i < 6 ? " sel" : ""), l));
for (let r = 1; r <= 36; r++) add(r, 0, "head rowhead" + (r === 1 ? " sel" : ""), String(r));

add(1, 1, "title", "TỔNG HỢP CHẤM CÔNG & LƯƠNG THEO BỘ PHẬN", 6, true);
["Bộ phận", "Số công nhân", "Tổng ngày công thực tế", "Tổng giờ tăng ca", "Tổng nghỉ không phép", "Tổng lương chi trả"]
  .forEach((t, i) => add(3, i + 1, "th", t, 1, true));
[
  ["Tổ Cắt", "2", "51", "26", "0", "13,130,000 ₫"],
  ["Tổ May", "2", "46", "12", "4", "10,160,000 ₫"],
  ["Tổ Ủi", "1", "24", "15", "0", "7,340,000 ₫"],
  ["Tổ Đóng gói", "1", "22", "5", "3", "4,150,000 ₫"],
  ["Tổ Kho", "2", "49", "19", "2", "12,012,000 ₫"],
  ["Tổ QC", "2", "51", "13", "0", "13,054,000 ₫"],
].forEach((row, r) => row.forEach((t, c) =>
  add(4 + r, c + 1, (c ? "mid" : "left") + (r % 2 ? "" : " alt"), t, 1, c === 0)));
["TỔNG CỘNG", "10", "243", "90", "9", "59,846,000 ₫"]
  .forEach((t, c) => add(10, c + 1, "total " + (c ? "mid" : "left"), t, 1, c === 0));

add(13, 1, "band", "CHỈ SỐ TỔNG QUAN", 2, true);
[
  ["Tổng số công nhân", "10"],
  ["Tổng quỹ lương tháng", "59,846,000 ₫"],
  ["Lương trung bình/người", "5,984,600 ₫"],
  ["Số CN nghỉ không phép", "3"],
  ["Số CN xếp loại Đủ công", "4"],
  ["Số CN xếp loại Chưa đạt", "1"],
].forEach(([k, v], r) => {
  const alt = r % 2 ? "" : " alt";
  add(14 + r, 1, "left label" + alt, k, 1, true);
  add(14 + r, 2, "mid strong" + alt, v);
});

add(22, 1, "band", "TRA CỨU NHANH THEO MÃ CÔNG NHÂN", 4, true);
[
  ["Nhập Mã CN:", "CN003"], ["Họ và tên:", "Lê Hoàng Cường"], ["Bộ phận:", "Tổ Ủi"],
  ["Tổng lương:", "7,340,000 ₫"], ["Xếp loại:", "Đạt"], ["", ""],
].forEach(([k, v], r) => {
  add(23 + r, 1, "left label alt", k, 1, k !== "");
  add(23 + r, 2, "mid" + (r === 0 ? " input" : r === 1 ? " wrap" : ""), v);
});

for (let r = 1; r <= 36; r++)
  for (let c = 1; c <= 21; c++)
    if (!taken.has(r + ":" + c)) add(r, c, "", "");

document.querySelectorAll(".chart text[textLength]").forEach(t =>
  t.setAttribute("lengthAdjust", "spacingAndGlyphs"));
```
